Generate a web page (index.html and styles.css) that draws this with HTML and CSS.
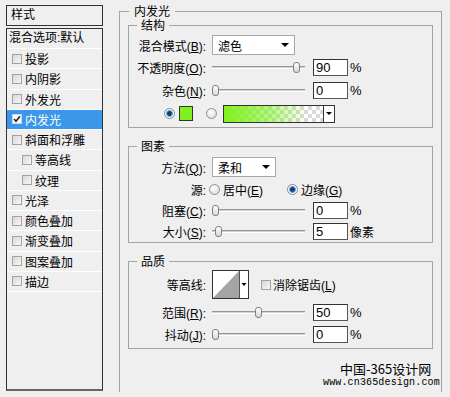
FILE: index.html
```html
<!DOCTYPE html>
<html lang="zh-CN">
<head>
    <meta charset="UTF-8">
    <title>图层样式 - 内发光</title>
    <link rel="stylesheet" href="styles.css">
</head>
<body>
<div class="dialog">
    <div class="styles-panel">
        <div class="panel-title">样式</div>
        <div class="panel-list">
            <div class="blend-item">混合选项:默认</div>
            <div class="item"><span class="check"></span>投影</div>
            <div class="item"><span class="check"></span>内阴影</div>
            <div class="item"><span class="check"></span>外发光</div>
            <div class="item active">
                <span class="check checked">
                    <svg width="8" height="8" viewBox="0 0 8 8"><path d="M1 4 L3 6.3 L7 1.2" fill="none" stroke="#222" stroke-width="1.6"/></svg>
                </span>内发光
            </div>
            <div class="item"><span class="check"></span>斜面和浮雕</div>
            <div class="item sub"><span class="check"></span>等高线</div>
            <div class="item sub"><span class="check"></span>纹理</div>
            <div class="item"><span class="check"></span>光泽</div>
            <div class="item"><span class="check"></span>颜色叠加</div>
            <div class="item"><span class="check"></span>渐变叠加</div>
            <div class="item"><span class="check"></span>图案叠加</div>
            <div class="item"><span class="check"></span>描边</div>
        </div>
    </div>

    <fieldset class="effect">
        <legend><span>内发光</span></legend>

        <fieldset class="group g-struct">
            <legend><span>结构</span></legend>
            <div class="row h22">
                <span class="lbl">混合模式(<u>B</u>):</span>
                <div class="select w-mode"><span>滤色</span><i class="arrow"></i></div>
            </div>
            <div class="row h23">
                <span class="lbl">不透明度(<u>O</u>):</span>
                <div class="slider"><div class="track"></div><div class="thumbs"><span class="thumb" style="left: 90%"></span></div></div>
                <div class="num">90</div><span class="unit">%</span>
            </div>
            <div class="row h23">
                <span class="lbl">杂色(<u>N</u>):</span>
                <div class="slider"><div class="track"></div><div class="thumbs"><span class="thumb" style="left: 0%"></span></div></div>
                <div class="num">0</div><span class="unit">%</span>
            </div>
            <div class="row h23 color-row">
                <span class="radio on"></span>
                <span class="swatch"></span>
                <span class="radio off-gap"></span>
                <div class="gradient-pick">
                    <span class="gradient"></span>
                    <span class="gradient-drop"><i class="arrow small"></i></span>
                </div>
            </div>
        </fieldset>

        <fieldset class="group g-elem">
            <legend><span>图素</span></legend>
            <div class="row h22">
                <span class="lbl">方法(<u>Q</u>):</span>
                <div class="select w-method"><span>柔和</span><i class="arrow"></i></div>
            </div>
            <div class="row h22">
                <span class="lbl">源:</span>
                <div class="src-opts">
                    <label class="opt"><span class="radio"></span><span>居中(<u>E</u>)</span></label>
                    <label class="opt"><span class="radio on"></span><span>边缘(<u>G</u>)</span></label>
                </div>
            </div>
            <div class="row h21">
                <span class="lbl">阻塞(<u>C</u>):</span>
                <div class="slider"><div class="track"></div><div class="thumbs"><span class="thumb" style="left: 0%"></span></div></div>
                <div class="num">0</div><span class="unit">%</span>
            </div>
            <div class="row h20">
                <span class="lbl">大小(<u>S</u>):</span>
                <div class="slider"><div class="track"></div><div class="thumbs"><span class="thumb" style="left: 4%"></span></div></div>
                <div class="num">5</div><span class="unit cjk">像素</span>
            </div>
        </fieldset>

        <fieldset class="group g-quality">
            <legend><span>品质</span></legend>
            <div class="row h31">
                <span class="lbl">等高线:</span>
                <div class="contour">
                    <svg width="35" height="27" viewBox="0 0 35 27">
                        <polygon points="0,27 26,0 26,27" fill="#a4a4a4"/>
                        <line x1="26.5" y1="0" x2="26.5" y2="27" stroke="#555" stroke-width="1"/>
                        <polygon points="28.5,12 33.5,12 31,15" fill="#000"/>
                    </svg>
                </div>
                <label class="aa"><span class="check"></span><span>消除锯齿(<u>L</u>)</span></label>
            </div>
            <div class="row h25">
                <span class="lbl">范围(<u>R</u>):</span>
                <div class="slider"><div class="track"></div><div class="thumbs"><span class="thumb" style="left: 48%"></span></div></div>
                <div class="num">50</div><span class="unit">%</span>
            </div>
            <div class="row h19">
                <span class="lbl">抖动(<u>J</u>):</span>
                <div class="slider"><div class="track"></div><div class="thumbs"><span class="thumb" style="left: 0%"></span></div></div>
                <div class="num">0</div><span class="unit">%</span>
            </div>
        </fieldset>
    </fieldset>

    <div class="watermark">
        <div class="wm-name">中国-365设计网</div>
        <div class="wm-url">www.cn365design.com</div>
    </div>
</div>
</body>
</html>
```

FILE: styles.css
```css
* {
    box-sizing: border-box;
}
html, body {
    margin: 0;
    padding: 0;
}
body {
    width: 450px;
    height: 397px;
    overflow: hidden;
    background: #efefef;
    font-family: "Liberation Sans", "Noto Sans CJK SC", sans-serif;
    font-size: 12px;
    color: #000;
}
u {
    text-decoration: underline;
    text-underline-offset: 1px;
}
.dialog {
    position: relative;
    display: flex;
    align-items: flex-start;
    height: 397px;
    padding: 5px 0 0 6px;
}

/* left list of styles */
.styles-panel {
    width: 97px;
    flex: none;
}
.panel-title {
    height: 21px;
    border: 1px solid #333;
    padding-left: 4px;
    line-height: 19px;
}
.panel-list {
    margin-top: 2px;
    height: 363px;
    border: 1px solid #333;
    border-bottom: 2px solid #666;
}
.blend-item {
    height: 20px;
    line-height: 19px;
    padding-left: 2px;
    border-bottom: 1px solid #fff;
    white-space: nowrap;
}
.item {
    height: 20.25px;
    display: flex;
    align-items: center;
    padding-left: 5px;
    border-bottom: 1px solid #fff;
}
.item.sub {
    padding-left: 15px;
}
.item.active {
    background: #3b97ea;
    color: #fff;
}
.check {
    width: 10px;
    height: 10px;
    flex: none;
    margin-right: 3px;
    border: 1px solid #a2a2a2;
    background: linear-gradient(135deg, #d8d8d8, #f7f7f7);
}
.check.checked {
    display: flex;
    align-items: center;
    justify-content: center;
    background: #fff;
    border-color: #c8d8e8;
}

/* group boxes */
fieldset {
    margin: 0;
    min-width: 0;
    border: 1px solid #a3a3a3;
}
legend {
    height: 14px;
    padding-top: 1px;
    font-family: "Noto Sans CJK SC", sans-serif;
}
legend span {
    display: block;
    height: 12px;
    line-height: 12px;
}
.effect {
    flex: none;
    width: 323px;
    height: 388px;
    margin: -1px 0 0 16px;
    padding: 0 8px;
    border-bottom: none;
}
.effect > legend {
    margin-left: 1px;
    padding-left: 5px;
    padding-right: 5px;
}
.group {
    padding: 0;
}
.group > legend {
    margin-left: 8px;
    padding-left: 4px;
    padding-right: 4px;
}
.g-struct {
    padding: 2px 0 2px;
}
.g-elem {
    margin-top: 11px;
    padding: 3px 0 1px;
}
.g-quality {
    margin-top: 11px;
    padding: 1px 0 4px;
}

/* rows */
.row {
    display: flex;
    align-items: center;
    white-space: nowrap;
}
.h19 { height: 19px; }
.h20 { height: 20px; }
.h21 { height: 21px; }
.h22 { height: 22px; }
.h23 { height: 23px; }
.h25 { height: 25px; }
.h31 { height: 31px; }
.lbl {
    flex: none;
    width: 77px;
    margin-right: 6px;
    text-align: right;
}

/* controls */
.select {
    height: 20px;
    display: flex;
    align-items: center;
    justify-content: space-between;
    padding: 0 5px;
    background: #fff;
    border: 1px solid #a8a8a8;
}
.w-mode {
    width: 83px;
}
.w-method {
    width: 64px;
}
.arrow {
    width: 0;
    height: 0;
    border-left: 4px solid transparent;
    border-right: 4px solid transparent;
    border-top: 4px solid #000;
}
.arrow.small {
    border-left-width: 3px;
    border-right-width: 3px;
    border-top-width: 3px;
}
.slider {
    position: relative;
    flex: none;
    width: 93px;
    height: 17px;
    display: flex;
    align-items: center;
}
.track {
    flex: 1;
    height: 3px;
    border-top: 1px solid #969696;
    border-bottom: 1px solid #fff;
    background: #d2d2d2;
}
.thumbs {
    position: absolute;
    left: 3px;
    right: -1px;
    top: 0;
    bottom: 0;
}
.thumb {
    position: absolute;
    top: 3px;
    width: 7px;
    height: 11px;
    margin-left: -3.5px;
    border: 1px solid #808080;
    border-radius: 3px;
    background: linear-gradient(#fff, #d6d6d6);
}
.num {
    flex: none;
    width: 35px;
    height: 17px;
    margin-left: 8px;
    padding-left: 2px;
    background: #fff;
    border: 1px solid #555;
    border-top-color: #333;
    border-left-color: #333;
    font-size: 13px;
    line-height: 15px;
}
.unit {
    margin-left: 2px;
    font-size: 13px;
}
.unit.cjk {
    font-size: 12px;
}
.radio {
    flex: none;
    width: 11px;
    height: 11px;
    border-radius: 50%;
    border: 1px solid #8e8e8e;
    background: radial-gradient(circle at 40% 35%, #fff, #d4d4d4);
}
.radio.on {
    border-color: #7b8ea0;
    background: radial-gradient(circle, #133e6c 0 1.8px, #3f86c4 2.6px, #8fb8dc 3.3px, #fff 3.8px, #e6e6e6 100%);
}
.color-row {
    padding-left: 35px;
}
.swatch {
    flex: none;
    width: 14px;
    height: 15px;
    margin-left: 4px;
    border: 1px solid #333;
    background: #80f020;
}
.radio.off-gap {
    margin-left: 13px;
}
.gradient-pick {
    display: flex;
    margin-left: 6px;
}
.gradient {
    width: 101px;
    height: 18px;
    border: 1px solid #333;
    background:
        linear-gradient(to right, #7ff21e 0%, rgba(127, 242, 30, 0.6) 45%, rgba(127, 242, 30, 0) 85%),
        conic-gradient(#dadada 90deg, #fff 90deg 180deg, #dadada 180deg 270deg, #fff 270deg) 0 0 / 8px 8px;
}
.gradient-drop {
    width: 11px;
    height: 18px;
    display: flex;
    align-items: center;
    justify-content: center;
    background: #fff;
    border: 1px solid #333;
    border-left: none;
}
.src-opts {
    display: flex;
    align-items: center;
    margin-left: -3px;
}
.opt {
    display: flex;
    align-items: center;
    gap: 3px;
}
.opt + .opt {
    margin-left: 24px;
}
.contour {
    flex: none;
    width: 37px;
    height: 29px;
    display: flex;
    background: #fff;
    border: 1px solid #333;
}
.aa {
    display: flex;
    align-items: center;
    margin-left: 12px;
}
.aa .check {
    margin-right: 2px;
}

/* watermark over the dialog */
.watermark {
    position: absolute;
    left: 323px;
    top: 362px;
}
.wm-name {
    padding-left: 17px;
    font-family: "Noto Sans CJK SC", sans-serif;
    font-size: 13px;
    line-height: 14px;
}
.wm-url {
    margin-top: 1px;
    font-family: "Liberation Mono", monospace;
    font-size: 10px;
    line-height: 12px;
    letter-spacing: 0.15px;
}
```
